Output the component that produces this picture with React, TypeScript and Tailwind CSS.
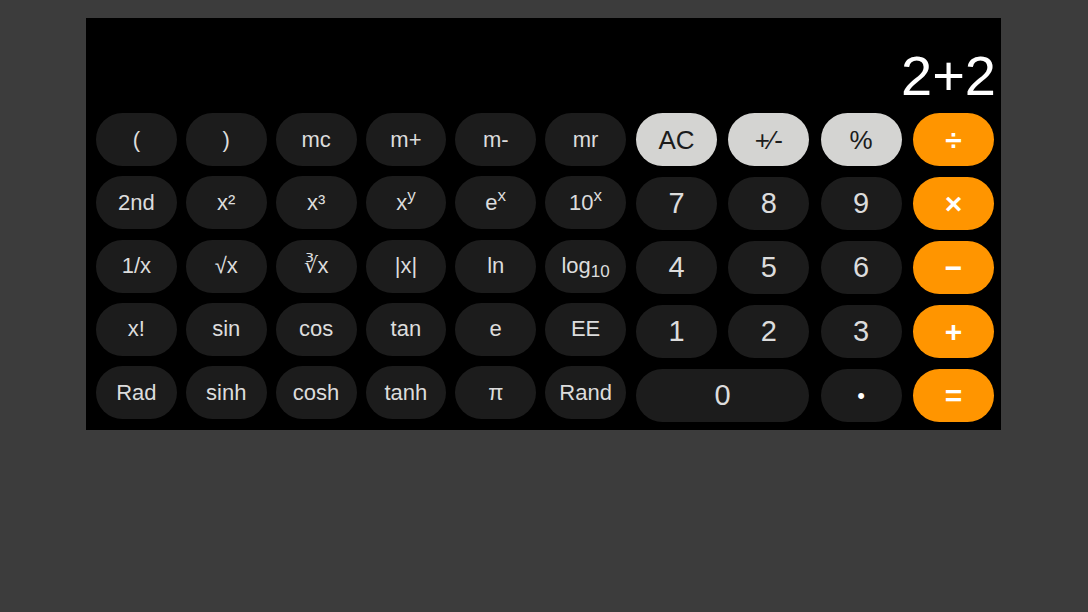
import React from "react";

type Key = {
  label: React.ReactNode;
  kind?: "dark" | "light" | "orange";
  wide?: boolean;
};

const scientific: React.ReactNode[] = [
  "(", ")", "mc", "m+", "m-", "mr",
  "2nd", "x²", "x³", <>x<sup className="text-[17px]">y</sup></>, <>e<sup className="text-[17px]">x</sup></>, <>10<sup className="text-[17px]">x</sup></>,
  "1/x", "√x", "∛x", "|x|", "ln", <>log<sub className="text-[17px]">10</sub></>,
  "x!", "sin", "cos", "tan", "e", "EE",
  "Rad", "sinh", "cosh", "tanh", "π", "Rand",
];

const basic: Key[] = [
  { label: "AC", kind: "light" },
  { label: "+⁄-", kind: "light" },
  { label: "%", kind: "light" },
  { label: "÷", kind: "orange" },
  { label: "7" },
  { label: "8" },
  { label: "9" },
  { label: "×", kind: "orange" },
  { label: "4" },
  { label: "5" },
  { label: "6" },
  { label: "−", kind: "orange" },
  { label: "1" },
  { label: "2" },
  { label: "3" },
  { label: "+", kind: "orange" },
  { label: "0", wide: true },
  { label: "•" },
  { label: "=", kind: "orange" },
];

export default function App() {
  return (
    <div
      className="min-h-[612px] w-full bg-[#3c3c3c] pt-[18px]"
      style={{ fontFamily: '"Liberation Sans", Arial, sans-serif' }}
    >
      <div className="ml-[86px] w-[915px] h-[412px] bg-black pl-[10px] pr-[5px]">
        <div className="h-[95px] flex items-end justify-end pb-[9px]">
          <span className="text-white text-[56px] leading-none">2+2</span>
        </div>

        <div className="flex items-start gap-[10px]">
          <div className="grid grid-cols-6 w-[530px] gap-x-[9px] gap-y-[10.3px]">
            {scientific.map((label, i) => (
              <button
                key={i}
                className="h-[53px] rounded-full bg-[#1c1c1c] text-[#dcdcdc] text-[22px] leading-none flex items-center justify-center"
              >
                <span>{label}</span>
              </button>
            ))}
          </div>

          <div className="grid grid-cols-4 w-[358px] gap-x-[11.33px] gap-y-[11px]">
            {basic.map((k, i) => {
              if (k.kind === "orange") {
                return (
                  <button
                    key={i}
                    className="h-[53px] rounded-full bg-[#ff9500] text-white text-[30px] font-bold leading-none flex items-center justify-center"
                  >
                    {k.label}
                  </button>
                );
              }
              if (k.kind === "light") {
                return (
                  <button
                    key={i}
                    className="h-[53px] rounded-full bg-[#d4d4d2] text-[#1c1c1c] text-[26px] leading-none flex items-center justify-center"
                  >
                    {k.label}
                  </button>
                );
              }
              return (
                <button
                  key={i}
                  className={
                    k.wide
                      ? "col-span-2 h-[53px] rounded-full bg-[#1c1c1c] text-[#dcdcdc] text-[29px] leading-none flex items-center justify-center"
                      : "h-[53px] rounded-full bg-[#1c1c1c] text-[#dcdcdc] text-[29px] leading-none flex items-center justify-center"
                  }
                >
                  {k.label === "•" ? <span className="text-white text-[22px]">•</span> : k.label}
                </button>
              );
            })}
          </div>
        </div>
      </div>
    </div>
  );
}
